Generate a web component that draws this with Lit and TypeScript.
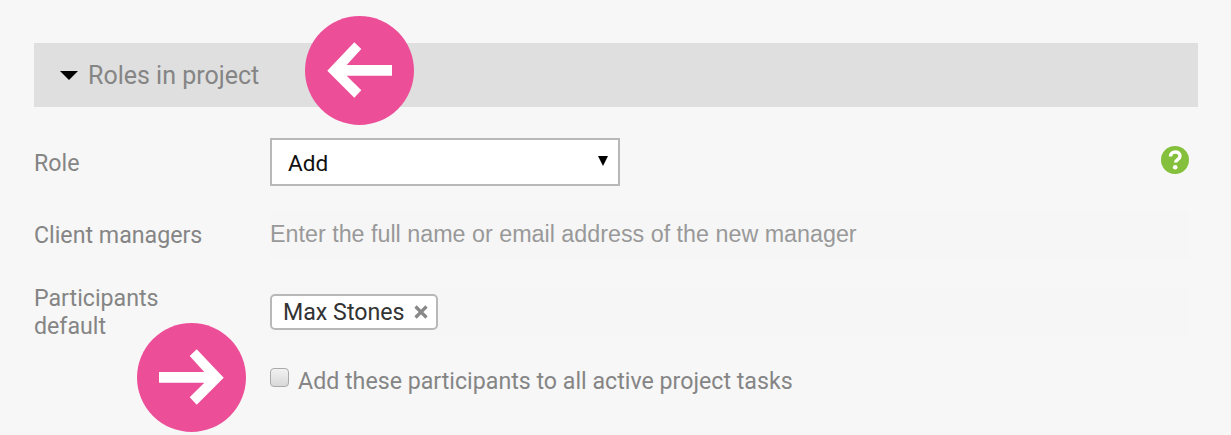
import { LitElement, html, css } from 'lit';
import { customElement } from 'lit/decorators.js';

@customElement('app-root')
export class AppRoot extends LitElement {
  static styles = css`
    :host {
      display: block;
      position: relative;
      width: 1231px;
      height: 435px;
      overflow: hidden;
      background: #f7f7f7;
      font-family: Roboto, sans-serif;
      color: #858585;
    }

    .page {
      padding: 43px 33px 0 34px;
    }

    .section {
      display: flex;
      align-items: center;
      gap: 10px;
      height: 64px;
      padding-left: 26px;
      background: #dfdfdf;
      font-size: 25px;
    }

    .caret {
      width: 0;
      height: 0;
      border-left: 9px solid transparent;
      border-right: 9px solid transparent;
      border-top: 9px solid #000;
    }

    .row {
      display: grid;
      grid-template-columns: 236px 1fr;
      font-size: 23.2px;
    }

    .row--role {
      grid-template-columns: 236px 350px 1fr;
      align-items: center;
      height: 48px;
      margin-top: 31px;
    }

    .role-label {
      padding-top: 2px;
    }

    .row--managers {
      align-items: center;
      height: 48px;
      margin-top: 25px;
    }

    .row--participants {
      height: 48px;
      margin-top: 29px;
    }

    .select {
      box-sizing: border-box;
      display: flex;
      align-items: center;
      justify-content: space-between;
      width: 350px;
      height: 48px;
      padding: 2px 10px 0 16px;
      background: #fff;
      border: 2px solid #b8b8b8;
      color: #111;
      font-size: 22.6px;
    }

    .select-arrow {
      width: 0;
      height: 0;
      border-left: 5px solid transparent;
      border-right: 5px solid transparent;
      border-top: 10px solid #000;
      margin-bottom: 4px;
    }

    .help {
      justify-self: end;
      margin: 0 9px 4px 0;
      width: 28px;
      height: 28px;
    }

    .input {
      box-sizing: border-box;
      display: flex;
      align-items: center;
      height: 48px;
      width: 919px;
      padding-bottom: 2px;
      background: #f6f6f6;
      font-family: 'Liberation Sans', sans-serif;
      font-size: 23.3px;
      color: #999;
    }

    .label-stack {
      line-height: 28px;
      margin-top: -4px;
    }

    .tags {
      display: flex;
      align-items: center;
      height: 48px;
      width: 919px;
      background: #f6f6f6;
    }

    .tag {
      box-sizing: border-box;
      display: flex;
      align-items: center;
      gap: 9px;
      height: 36px;
      padding: 0 9px 0 11px;
      background: #fff;
      border: 2px solid #b8b8b8;
      border-radius: 5px;
      color: #333;
      font-size: 23.2px;
    }

    .tag-x {
      width: 14px;
      height: 14px;
      margin-right: -1px;
    }

    .check-row {
      display: flex;
      align-items: center;
      gap: 9px;
      margin: 31px 0 0 236px;
      font-size: 23.2px;
    }

    .check {
      box-sizing: border-box;
      width: 19px;
      height: 19px;
      margin-bottom: 8px;
      background: linear-gradient(#f2f2f2, #d8d8d8);
      border: 1px solid #aaa;
      border-radius: 4px;
    }

    .arrow {
      position: absolute;
      width: 110px;
      height: 110px;
    }

    .arrow--back {
      left: 304px;
      top: 16px;
    }

    .arrow--forward {
      left: 137px;
      top: 323px;
    }
  `;

  private renderArrow(cls: string, cx: number, points: string) {
    return html`
      <svg class="arrow ${cls}" viewBox="0 0 110 110">
        <circle cx=${cx} cy="54.5" r="54.5" fill="#ec4f98" />
        <polygon points=${points} fill="#fff" />
      </svg>
    `;
  }

  render() {
    return html`
      <div class="page">
        <div class="section">
          <span class="caret"></span>
          <span>Roles in project</span>
        </div>

        <div class="row row--role">
          <span class="role-label">Role</span>
          <div class="select"><span>Add</span><span class="select-arrow"></span></div>
          <svg class="help" viewBox="0 0 28 28">
            <circle cx="14" cy="14" r="14" fill="#84c03b" />
            <path d="M9.500 10.500c0-6 9.500-6 9.500-.5 0 3.500-4.500 3.500-4.500 6.500" fill="none" stroke="#fff" stroke-width="3.400" />
            <circle cx="14.200" cy="21.300" r="2.300" fill="#fff" />
          </svg>
        </div>

        <div class="row row--managers">
          <span>Client managers</span>
          <div class="input">Enter the full name or email address of the new manager</div>
        </div>

        <div class="row row--participants">
          <span class="label-stack">Participants<br />default</span>
          <div class="tags">
            <div class="tag">
              <span>Max Stones</span>
              <svg class="tag-x" viewBox="0 0 14 14">
                <path d="M1.500 1.500l11 11M12.500 1.500l-11 11" stroke="#888" stroke-width="3.200" />
              </svg>
            </div>
          </div>
        </div>

        <div class="check-row">
          <span class="check"></span>
          <span>Add these participants to all active project tasks</span>
        </div>
      </div>

      ${this.renderArrow('arrow--back', 55.5, '23.300,54.700 50.300,26.300 57.300,33 42.700,49 88,49 88,59.700 42.700,59.700 57.300,74.300 50.300,81.700')}
      ${this.renderArrow('arrow--forward', 54.5, '86.700,54.700 59.700,26.300 52.700,33 67.300,49 22,49 22,59.700 67.300,59.700 52.700,74.300 59.700,81.700')}
    `;
  }
}
